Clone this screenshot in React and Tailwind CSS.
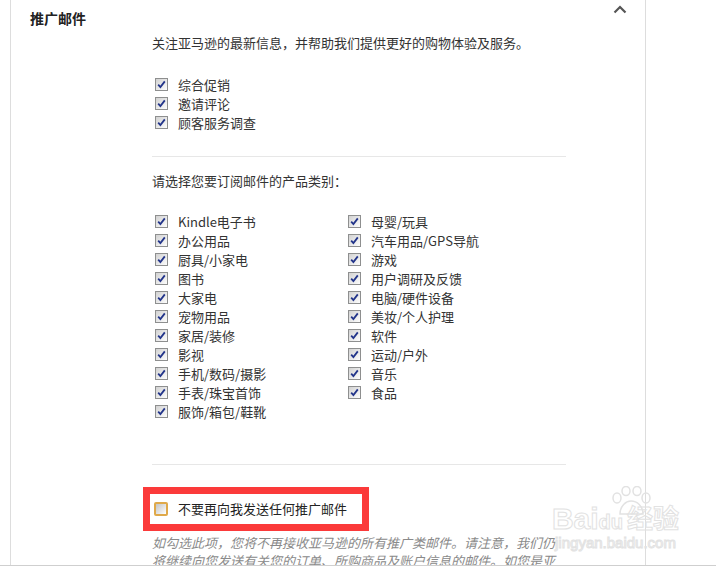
import React from "react";

const promos = ["综合促销", "邀请评论", "顾客服务调查"];

const leftCats = [
  "Kindle电子书",
  "办公用品",
  "厨具/小家电",
  "图书",
  "大家电",
  "宠物用品",
  "家居/装修",
  "影视",
  "手机/数码/摄影",
  "手表/珠宝首饰",
  "服饰/箱包/鞋靴",
];

const rightCats = [
  "母婴/玩具",
  "汽车用品/GPS导航",
  "游戏",
  "用户调研及反馈",
  "电脑/硬件设备",
  "美妆/个人护理",
  "软件",
  "运动/户外",
  "音乐",
  "食品",
];

function Box() {
  return (
    <span className="w-[13px] h-[13px] shrink-0 border border-[#8e8f8f] bg-linear-to-br from-[#d2d2d2] to-[#fdfdfd] flex items-center justify-center">
      <svg width="9" height="9" viewBox="0 0 9 9">
        <path d="M1.2 4.6 L3.4 7 L7.8 1.4" fill="none" stroke="#22348a" strokeWidth="1.8" />
      </svg>
    </span>
  );
}

function Row({ label }) {
  return (
    <div className="h-[19px] flex items-center">
      <Box />
      <span className="ml-[10px] whitespace-nowrap">{label}</span>
    </div>
  );
}

function Watermark() {
  return (
    <div className="absolute left-[548px] top-[486px] w-[135px] flex flex-col items-center pointer-events-none text-transparent [-webkit-text-stroke:1px_#e2e2e2]">
      <svg width="46" height="30" viewBox="0 0 46 30" className="ml-[30px]">
        <g fill="none" stroke="#e2e2e2" strokeWidth="1.5">
          <ellipse cx="9" cy="12" rx="4" ry="5" />
          <ellipse cx="18" cy="5" rx="4" ry="4.5" />
          <ellipse cx="29" cy="5" rx="4" ry="4.5" />
          <ellipse cx="38" cy="12" rx="4" ry="5" />
          <path d="M12 28 C12 20 18 15 23 15 C29 15 35 20 35 28 Z" />
        </g>
      </svg>
      <div className="flex items-end -mt-[12px] font-['Liberation_Sans','Noto_Sans_CJK_SC',sans-serif] font-bold">
        <span className="text-[30px] leading-[30px]">Bai</span>
        <span className="text-[20px] leading-[24px]">du</span>
        <span className="ml-[4px] text-[26px] leading-[30px]">经验</span>
      </div>
      <div className="text-[15px] leading-[18px] font-['Liberation_Sans',sans-serif]">jingyan.baidu.com</div>
    </div>
  );
}

export default function App() {
  return (
    <div className="w-[716px] h-[567px] relative overflow-hidden bg-white text-[13px] text-[#333] font-['Noto_Sans_CJK_SC','Noto_Sans',sans-serif]">
      <div className="h-[565px] overflow-hidden">
        <div className="ml-[10px] w-[636px] h-full border-x border-[#dddddd]">
          <div className="flex justify-between pt-[8px] pl-[19px] pr-[18px]">
            <div className="h-[20px] leading-[20px] text-[14px] font-bold text-[#222]">推广邮件</div>
            <svg width="14" height="9" viewBox="0 0 14 9" className="-mt-[3px]">
              <path d="M1.5 7.5 L7 2 L12.5 7.5" fill="none" stroke="#555" strokeWidth="2.2" />
            </svg>
          </div>

          <div className="ml-[141px] w-[414px]">
            <div className="mt-[5px] leading-[19px]">关注亚马逊的最新信息，并帮助我们提供更好的购物体验及服务。</div>

            <div className="mt-[23px] pl-[3px]">
              {promos.map((p) => (
                <Row key={p} label={p} />
              ))}
            </div>

            <div className="mt-[24px] h-px bg-[#e7e7e7]" />

            <div className="mt-[14px] leading-[19px]">请选择您要订阅邮件的产品类别：</div>

            <div className="mt-[22px] pl-[3px] grid grid-cols-[193px_1fr]">
              <div>
                {leftCats.map((c) => (
                  <Row key={c} label={c} />
                ))}
              </div>
              <div>
                {rightCats.map((c) => (
                  <Row key={c} label={c} />
                ))}
              </div>
            </div>

            <div className="mt-[43px] h-px bg-[#e7e7e7]" />

            <div className="mt-[22px] -ml-[9px] w-[226px] h-[44px] border-[7px] border-[#fb3a3a] flex items-center pl-[4px]">
              <span className="w-[14px] h-[14px] shrink-0 border-2 border-[#dfa94a] rounded-[2px] bg-linear-to-br from-[#c4c4c4] to-[#ffffff]" />
              <span className="ml-[10px] text-[#222] whitespace-nowrap">不要再向我发送任何推广邮件</span>
            </div>

            <p className="mt-[3px] leading-[18px] italic text-[#8a8a8a]">
              如勾选此项，您将不再接收亚马逊的所有推广类邮件。请注意，我们仍将继续向您发送有关您的订单、所购商品及账户信息的邮件。如您是亚马逊的卖家，您仍将收到相关的邮件。
            </p>
          </div>
        </div>
      </div>
      <div className="h-px bg-[#cfcfcf]" />
      <Watermark />
    </div>
  );
}
